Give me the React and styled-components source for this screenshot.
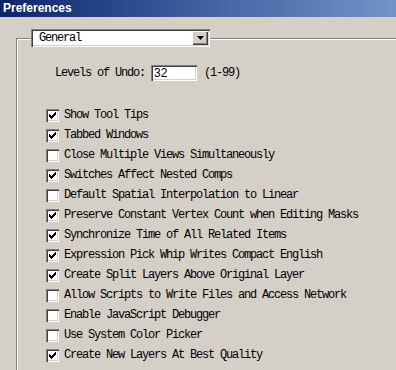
import React from "react";
import styled, { createGlobalStyle } from "styled-components";

const GlobalStyle = createGlobalStyle`
  html, body {
    margin: 0;
    padding: 0;
    background: #d4d0c8;
    overflow: hidden;
  }
  body {
    font-family: "Liberation Mono", "DejaVu Sans Mono", monospace;
  }
`;

const Window = styled.div`
  width: 396px;
  height: 370px;
  background: #d4d0c8;
  overflow: hidden;
  display: flex;
  flex-direction: column;
`;

const TitleBar = styled.div`
  height: 17px;
  flex: none;
  background: linear-gradient(to right, #0a246a 0%, #3a5a9c 45%, #7393c8 100%);
  color: #fff;
  font-family: "Liberation Sans", Arial, sans-serif;
  font-weight: bold;
  font-size: 12px;
  line-height: 17px;
  padding-left: 3px;
`;

const Group = styled.div`
  margin: 21px -10px 0 16px;
  flex: 1;
  border-top: 1px solid #808080;
  border-left: 1px solid #808080;
`;

const GroupInner = styled.div`
  height: 100%;
  border-top: 1px solid #fff;
  border-left: 1px solid #fff;
  display: flex;
  flex-direction: column;
  align-items: flex-start;
`;

const Sunken = styled.div`
  background: #fff;
  box-shadow: inset 1px 1px 0 #808080, inset 2px 2px 0 #404040,
    inset -1px -1px 0 #fff, inset -2px -2px 0 #d4d0c8;
`;

const Select = styled(Sunken)`
  margin: -11px 0 0 13px;
  width: 179px;
  height: 18px;
  display: flex;
  align-items: center;
  justify-content: space-between;
  padding: 2px;
  box-sizing: border-box;
`;

const SelectText = styled.span`
  font-size: 12px;
  letter-spacing: -1.2px;
  padding-left: 6px;
  color: #000;
`;

const ArrowButton = styled.div`
  width: 16px;
  height: 14px;
  background: #d4d0c8;
  box-shadow: inset 1px 1px 0 #fff, inset -1px -1px 0 #404040,
    inset -2px -2px 0 #808080;
  display: flex;
  align-items: center;
  justify-content: center;
`;

const Mono = styled.span`
  font-size: 12px;
  letter-spacing: -1.2px;
  color: #000;
  white-space: nowrap;
`;

const UndoRow = styled.div`
  margin: 18px 0 0 37px;
  display: flex;
  align-items: center;
  height: 16px;
`;

const NumberField = styled(Sunken)`
  width: 46px;
  height: 16px;
  margin: 0 7px 0 6px;
  box-sizing: border-box;
  padding: 0 3px;
  font-family: "Liberation Sans", Arial, sans-serif;
  font-size: 12px;
  line-height: 16px;
  color: #000;
`;

const List = styled.div`
  margin: 25px 0 0 28px;
  display: flex;
  flex-direction: column;
`;

const Row = styled.div`
  height: 20px;
  display: flex;
  align-items: flex-start;
`;

const Box = styled(Sunken)`
  width: 13px;
  height: 13px;
  flex: none;
  margin: 3px 5px 0 0;
  display: flex;
  align-items: center;
  justify-content: center;
`;

const RowLabel = styled(Mono)`
  line-height: 19px;
`;

const Check = () => (
  <svg width="7" height="7" viewBox="0 0 7 7" shapeRendering="crispEdges">
    {[2, 3, 4, 3, 2, 1, 0].map((y, x) => (
      <rect key={x} x={x} y={y} width="1" height="3" fill="#000" />
    ))}
  </svg>
);

const options = [
  ["Show Tool Tips", true],
  ["Tabbed Windows", true],
  ["Close Multiple Views Simultaneously", false],
  ["Switches Affect Nested Comps", true],
  ["Default Spatial Interpolation to Linear", false],
  ["Preserve Constant Vertex Count when Editing Masks", true],
  ["Synchronize Time of All Related Items", true],
  ["Expression Pick Whip Writes Compact English", true],
  ["Create Split Layers Above Original Layer", true],
  ["Allow Scripts to Write Files and Access Network", false],
  ["Enable JavaScript Debugger", false],
  ["Use System Color Picker", false],
  ["Create New Layers At Best Quality", true],
];

export default function App() {
  return (
    <>
      <GlobalStyle />
      <Window>
        <TitleBar>Preferences</TitleBar>
        <Group>
          <GroupInner>
            <Select>
              <SelectText>General</SelectText>
              <ArrowButton>
                <svg width="7" height="4" viewBox="0 0 7 4">
                  <path d="M0 0H7L3.5 4Z" fill="#000" />
                </svg>
              </ArrowButton>
            </Select>
            <UndoRow>
              <Mono>Levels of Undo:</Mono>
              <NumberField>32</NumberField>
              <Mono>(1-99)</Mono>
            </UndoRow>
            <List>
              {options.map(([label, checked]) => (
                <Row key={label}>
                  <Box>{checked && <Check />}</Box>
                  <RowLabel>{label}</RowLabel>
                </Row>
              ))}
            </List>
          </GroupInner>
        </Group>
      </Window>
    </>
  );
}
